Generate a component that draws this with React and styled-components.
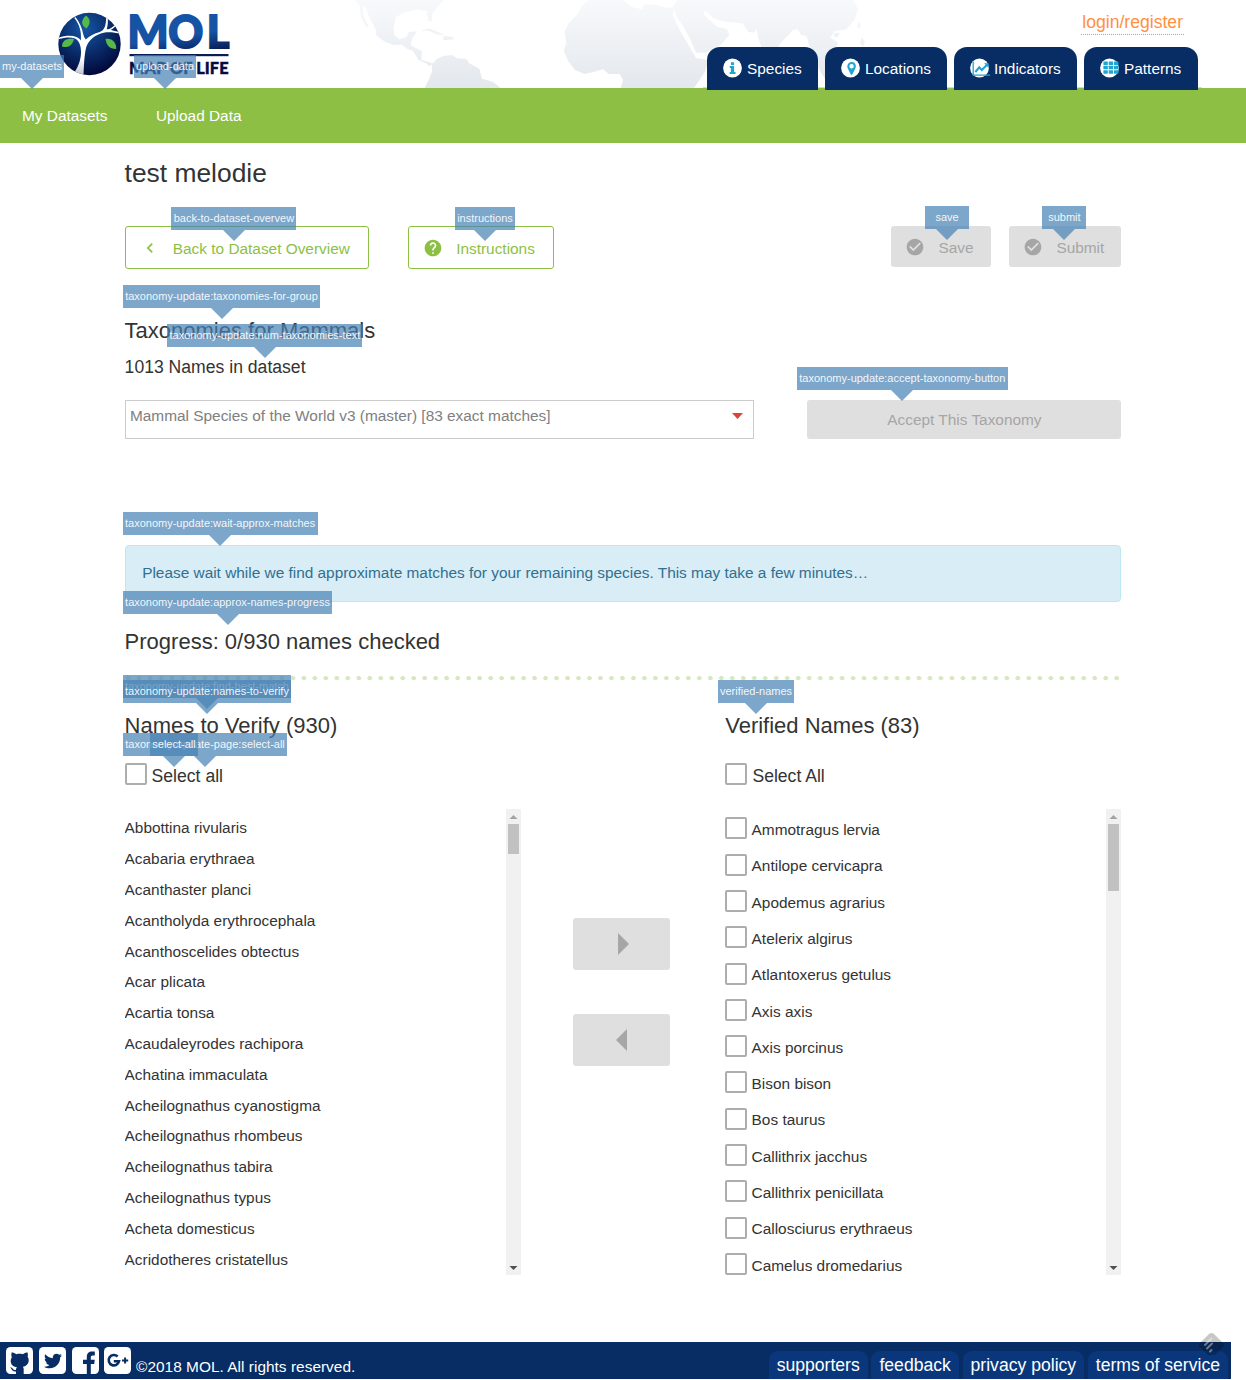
import React from 'react';
import styled, { createGlobalStyle, css } from 'styled-components';
import { MdCheckCircle, MdHelp, MdChevronLeft } from 'react-icons/md';
import { FaTwitter } from 'react-icons/fa';

const GlobalStyle = createGlobalStyle`
  * { box-sizing: border-box; }
  body {
    margin: 0;
    background: #fff;
    color: #333;
    font-family: "Liberation Sans", Arial, sans-serif;
    font-size: 15.4px;
    line-height: 22px;
  }
  h1, h2, h3, p, ul { margin: 0; padding: 0; font-weight: 400; }
  ul { list-style: none; }
`;

const Page = styled.div`
  display: flex;
  flex-direction: column;
  height: 1380px;
  overflow: hidden;
`;

/* ---------- translation key tags ---------- */

const TagBox = styled.span`
  position: absolute;
  left: ${(p) => p.$x}px;
  top: ${(p) => p.$y}px;
  z-index: 5;
  min-width: 44px;
  width: ${(p) => (p.$w ? p.$w + 'px' : 'auto')};
  height: 23px;
  background: rgba(70, 130, 180, 0.7);
  color: rgba(255, 255, 255, 0.92);
  font-size: 11px;
  line-height: 23px;
  text-align: center;
  white-space: nowrap;
  &::after {
    content: '';
    position: absolute;
    left: 50%;
    top: 23px;
    margin-left: -11px;
    border: 11px solid transparent;
    border-top-color: rgba(70, 130, 180, 0.7);
    border-bottom: 0;
  }
`;

const Tag = ({ x, y, w, children }) => (
  <TagBox $x={x} $y={y} $w={w}>{children}</TagBox>
);

/* ---------- header ---------- */

const Header = styled.header`
  position: relative;
  z-index: 2;
  height: 88px;
  flex: none;
  display: flex;
  justify-content: space-between;
  padding: 0 48px 0 56px;
`;

const WorldMap = styled.svg`
  position: absolute;
  left: 340px;
  top: 0;
`;

const LogoArt = styled.svg`
  position: relative;
  margin-top: 10px;
  flex: none;
`;

const HeaderRight = styled.div`
  position: relative;
  display: flex;
  flex-direction: column;
  align-items: flex-end;
`;

const Login = styled.a`
  flex: none;
  margin: 11px 14px 12px 0;
  height: 24px;
  padding: 0 1px;
  line-height: 22px;
  font-size: 17.6px;
  color: #ff9040;
  border-bottom: 1px dotted #ff9040;
`;

const Tabs = styled.nav`
  position: relative;
  flex: none;
  display: flex;
  gap: 7px;
  height: 43px;
  &::before {
    content: '';
    position: absolute;
    left: -4px;
    right: -4px;
    top: 40px;
    height: 1px;
    background: #d4d7dc;
  }
`;

const Tab = styled.a`
  position: relative;
  display: flex;
  align-items: center;
  gap: 5px;
  width: ${(p) => p.$w}px;
  padding: 1px 0 0 16px;
  color: #fff;
  background: #072d64;
  border-radius: 13px 13px 0 0;
  svg { flex: none; margin-top: -3px; }
`;

const GreenBar = styled.nav`
  position: relative;
  z-index: 3;
  flex: none;
  height: 55px;
  display: flex;
  align-items: center;
  gap: 48.4px;
  padding: 1px 0 0 22px;
  color: #fff;
`;

const GreenWrap = styled.div`
  flex: none;
  background: #8dbf45;
`;

const C = '#1fa5d2';
const glyphs = {
  info: <path fill={C} d="M7.9 4.2h3.2v2.7H7.9zM6.7 8h4.4v5.9h1.4V16H6.7v-2.1h1.2V10H6.7z" />,
  pin: <path fill={C} fillRule="evenodd" d="M10.6 4a4.3 4.3 0 0 0-4.3 4.3c0 1.2.4 1.9.9 2.9l2.6 5.2c.3.6 1.2.6 1.5 0l2.7-5.2c.5-1 .8-1.7.8-2.9A4.3 4.3 0 0 0 10.6 4zm0 2.1a2.2 2.2 0 1 1 0 4.4 2.2 2.2 0 0 1 0-4.4z" />,
  chart: (
    <g fill="none" stroke={C}>
      <path strokeWidth="1.3" d="M3.2 3.6v13.5h17" />
      <path strokeWidth="2.1" d="M5.3 14l4-4.6 2.5 2.5 5.5-5.4" />
      <path fill={C} stroke="none" d="M14 5.2h4.6v4.6z" />
    </g>
  ),
  grid: (
    <g fill={C}>
      {[3.4, 7.8, 12.2].map((y) => [3.4, 8.7, 14].map((x) => (
        <rect key={x + '-' + y} x={x} y={y} width="4.4" height="3.5" rx=".4" />
      )))}
    </g>
  ),
};

const TabIcon = ({ kind }) => (
  <svg width="19" height="20" viewBox="0 0 19 20" overflow="visible">
    <ellipse cx="9.5" cy="10" rx="9.4" ry="9.6" fill="#fff" />
    {glyphs[kind]}
  </svg>
);

const Logo = () => (
  <LogoArt width="180" height="70" viewBox="56 10 180 70">
    <defs>
      <radialGradient id="globe" cx=".42" cy=".25" r=".75">
        <stop offset="0" stopColor="#1656a8" />
        <stop offset=".5" stopColor="#0a2f6e" />
        <stop offset="1" stopColor="#02083a" />
      </radialGradient>
      <linearGradient id="word" gradientUnits="userSpaceOnUse" x1="129" y1="15" x2="134" y2="50">
        <stop offset=".3" stopColor="#1553a4" />
        <stop offset="1" stopColor="#030b40" />
      </linearGradient>
      <linearGradient id="trunk" x1="0" y1="0" x2="0" y2="1">
        <stop offset="0" stopColor="#fff" />
        <stop offset=".7" stopColor="#fff" />
        <stop offset="1" stopColor="#b9bec9" />
      </linearGradient>
      <clipPath id="disc"><circle cx="89.5" cy="44" r="31.2" /></clipPath>
    </defs>
    <circle cx="89.5" cy="44" r="31.2" fill="url(#globe)" />
    <g clipPath="url(#disc)">
      <path fill="url(#trunk)" d="M73 74c5-6 8-14 8-22 0-6-1.500-11-6-13.500-5-1.500-10-1-16.500.7v-1.400c7-2.300 13-2.600 18-.8 2 .8 3.500 2 4.300 3.500.8-8-1-16-6.500-22.500l1.200-1c4 5 6.500 11 7.700 17 .6 2.500 1.500 4 2.500 5.500 4-3.600 8.500-6 14-7.500 4-1.500 6.500-5 6.400-15h1.600c.5 6-.1 9.500-1 12.300 5 .6 9 2 14 3.200v1.400c-6-1.300-11-2-17-1.200-8 1.600-15 7-17.500 14.600C84.300 55 84 65 83.500 76z" />
      <path fill="#fff" d="M106.500 30c4-1.200 7-3.500 10-6.500l.8 1c-3 3.500-6 5.500-10 7z" />
    </g>
    <g fill="#57b947">
      <path d="M86 15.500c5 3.500 4.500 9 .3 13-6-3.500-5-9-.3-13z" />
      <path d="M62 46.500c0-6.500 5.500-8.500 12-7.500-1.500 6.500-6.500 9.500-12 7.500z" />
      <path d="M105.500 39c7-1 11 4 10.700 10-6.500.2-10-4-10.700-10z" />
    </g>
    <text
      transform="translate(129 0) scale(.95 1)"
      x="-1.600 41.200 81.800"
      y="48.300"
      fontFamily="Lato, sans-serif"
      fontWeight="900"
      fontSize="45.500"
      fill="url(#word)"
      stroke="url(#word)"
      strokeWidth="1.900"
    >
      MOL
    </text>
    <rect x="129.500" y="54" width="99" height="2.200" fill="#0a1c55" />
    <text x="129" y="74" fontFamily="Lato, sans-serif" fontWeight="900" fontSize="16.300" textLength="99.500" lengthAdjust="spacing" fill="#060c40" stroke="#060c40" strokeWidth=".4">MAP OF LIFE</text>
  </LogoArt>
);

const MapArt = () => (
  <WorldMap width="540" height="88" viewBox="0 0 540 88">
    <defs>
      <linearGradient id="land" gradientUnits="userSpaceOnUse" x1="0" y1="0" x2="0" y2="264">
        <stop offset="0" stopColor="#f8f9fb" />
        <stop offset="1" stopColor="#e3e8ed" />
      </linearGradient>
    </defs>
    <g transform="scale(.3444 .3333)" fill="url(#land)">
      <path d="M45 0L57 18 60 48 76 80 83 82 67 42 66 22 75 22 84 50 104 88 105 106 130 125 155 135 180 134 196 148 212 152 228 180 250 190 258 198 266 194 268 212 258 238 246 264H466L445 246 412 236 405 206 375 190 366 176 340 175 325 165 300 168 282 176 270 190 250 184 236 180 238 154 205 136 210 115 224 94 200 96 192 112 172 118 158 106 155 85 162 52 190 36 225 29 252 34 256 62 266 64 268 42 290 12 302 0Z" />
      <path d="M233 92L258 85 284 95 304 106 280 103 256 92ZM300 108L326 110 332 118 300 121Z" />
      <path d="M722 0L700 22 690 42 664 70 652 95 657 128 650 152 662 182 682 210 710 222 738 215 764 208 780 222 812 222 822 240 815 264H1028L1060 215 1070 180 1034 174 1008 128 988 92 965 44 974 20 950 24 918 14 885 12 876 28 850 22 822 0Z" />
      <path d="M980 0L968 18 978 52 996 78 1018 120 1034 158 1062 158 1104 136 1130 106 1124 86 1095 80 1080 66 1056 44 1060 30 1084 54 1110 64 1168 70 1186 96 1202 98 1210 88 1214 112 1226 150 1244 204 1262 160 1280 128 1316 90 1330 88 1338 104 1355 108 1364 140 1380 190 1410 240 1420 220 1410 180 1436 160 1446 128 1424 112 1436 94 1470 88 1494 60 1504 26 1490 0Z" />
      <path d="M1505 66L1512 72 1508 88 1502 80ZM1516 112L1524 126 1518 142 1510 128ZM1434 100L1450 98 1446 110 1436 112Z" />
    </g>
  </WorldMap>
);

/* ---------- content ---------- */

const Main = styled.main`
  flex: none;
  height: 1199px;
  padding: 0 124.6px;
`;

const Title = styled.h1`
  font-size: 26.4px;
  line-height: 30px;
  padding-top: 15px;
`;

const Heading = styled.h2`
  position: relative;
  padding-left: ${(p) => p.$indent || 0}px;
  font-size: 22px;
  line-height: 26px;
`;

const Progress = styled(Heading)`
  margin-top: 27px;
`;

const Sub = styled.h3`
  position: relative;
  padding-top: 12px;
  font-size: 17.6px;
  line-height: 22px;
`;

const ActionRow = styled.div`
  display: flex;
  align-items: flex-start;
  margin: 38px 0 49px;
  height: 43px;
`;

const buttonBase = css`
  position: relative;
  display: flex;
  align-items: center;
  border-radius: 3px;
  svg { flex: none; }
`;

const OutlineButton = styled.a`
  ${buttonBase}
  width: ${(p) => p.$w}px;
  height: 43px;
  margin-right: 39px;
  padding: 2px 0 0 14.2px;
  border: 1px solid #8dbf45;
  color: #8dbf45;
  svg { width: 20px; height: 20px; margin: -2px 13px 0 0; }
`;

const GrayButton = styled.div`
  ${buttonBase}
  width: ${(p) => p.$w}px;
  height: ${(p) => p.$h}px;
  padding-left: ${(p) => (p.$icon ? '14px' : 0)};
  padding-top: ${(p) => (p.$icon ? '2px' : 0)};
  justify-content: ${(p) => (p.$icon ? 'flex-start' : 'center')};
  background: #dfdfdf;
  color: #a6a6a6;
`;

const Right = styled.div`
  display: flex;
  gap: 18px;
  margin-left: auto;
  ${GrayButton} svg { width: 20px; height: 20px; margin: -2px 13px 0 0; }
`;

const PickRow = styled.div`
  display: flex;
  justify-content: space-between;
  margin: 22px 0 106px;
  height: 39px;
`;

const Select = styled.div`
  display: flex;
  justify-content: space-between;
  width: 629.4px;
  padding: 4px 10px 0 4.4px;
  border: 1px solid #ccc;
  color: #808080;
  svg { margin-top: 8px; }
`;

const Notice = styled.div`
  position: relative;
  height: 57px;
  padding: 16px 16.6px;
  background: #d9edf7;
  border: 1px solid #bce8f1;
  border-radius: 4px;
  color: #31708f;
`;

const Divider = styled.div`
  position: relative;
  height: 4px;
  margin: 21px 0 33px;
  background: radial-gradient(circle at 2.6px 2.2px, #d6e8c0 2px, transparent 2.5px) .5px 0 / 10.99px 4px repeat-x;
`;

const Columns = styled.div`
  display: flex;
  justify-content: space-between;
`;

const Column = styled.section`
  width: 396.6px;
`;

const SelectAll = styled.label`
  position: relative;
  display: flex;
  gap: ${(p) => p.$gap}px;
  height: 22px;
  margin: 24px 0;
  font-size: 17.6px;
  line-height: 27px;
`;

const Box = styled.span`
  flex: none;
  width: 22px;
  height: 22px;
  border: 2px solid #adadad;
  border-radius: 2px;
`;

const ListFrame = styled.div`
  display: flex;
  justify-content: space-between;
  height: 466px;
  overflow: hidden;
`;

const NameList = styled.ul`
  padding-top: ${(p) => p.$top}px;
`;

const Name = styled.li`
  height: 30.8px;
  line-height: 30.8px;
`;

const CheckName = styled.li`
  display: flex;
  gap: 4.8px;
  height: 36.3px;
  padding-top: 4px;
  line-height: 26px;
`;

const CheckText = styled.span`
  margin-top: -0.35px;
`;

const Track = styled.div`
  display: flex;
  flex-direction: column;
  align-items: center;
  width: 15px;
  background: #f1f1f1;
  svg { flex: none; }
`;

const Thumb = styled.div`
  width: 11px;
  height: ${(p) => p.$h}px;
  margin-bottom: auto;
  background: #c1c1c1;
`;

const Scrollbar = ({ thumb }) => (
  <Track>
    <svg width="15" height="15"><path d="M3.500 10L7.500 6 11.500 10Z" fill="#a3a3a3" /></svg>
    <Thumb $h={thumb} />
    <svg width="15" height="15"><path d="M3.500 6L7.500 10 11.500 6Z" fill="#505050" /></svg>
  </Track>
);

const Movers = styled.div`
  display: flex;
  flex-direction: column;
  gap: 44px;
  width: 97px;
  margin-right: 4px;
  padding-top: 205px;
`;

/* ---------- footer ---------- */

const Footer = styled.footer`
  position: relative;
  flex: none;
  width: 1231px;
  height: 37px;
  display: flex;
  align-items: flex-start;
  padding: 0 3px 0 6.4px;
  background: #072d64;
  color: #fff;
`;

const Social = styled.div`
  display: flex;
  gap: 5.7px;
  margin-top: 5.4px;
`;

const Tile = styled.span`
  display: flex;
  align-items: center;
  justify-content: center;
  width: 27px;
  height: 27px;
  border-radius: 4.5px;
  background: #fff;
  color: #072d64;
  overflow: hidden;
`;

const Copyright = styled.span`
  margin: 14px 0 0 4.6px;
  letter-spacing: 0.03px;
`;

const FooterLinks = styled.div`
  display: flex;
  gap: 3.7px;
  margin: 9px 0 0 auto;
  font-size: 17.6px;
`;

const FooterLink = styled.a`
  height: 28px;
  padding: 0 8px;
  line-height: 28px;
  background: #0a377b;
  border-radius: 9px 9px 0 0;
`;

const Badge = styled.svg`
  position: absolute;
  left: 1198px;
  top: -10px;
`;

const Octocat = () => (
  <svg width="27" height="27" viewBox="0 0 27 27">
    <path fill="currentColor" d="M5.600 5.600c1.800 0 3.300.7 4.600 1.700 2.200-.6 4.500-.6 6.700 0 1.300-1 2.800-1.700 4.600-1.700.6 1.600.5 3 .1 4.200 1 1.300 1.300 2.900 1 4.700-.5 3.200-2.700 4.700-5.700 5.200.6.700.8 1.500.8 2.500V27H10v-2.600c-2.400.3-3.600-.5-4.400-2.100-.4-.8-.9-1.300-1.600-1.700 1.400-.4 2.300.3 3 1.300.8 1 1.600 1.300 3 .9.100-1.200.4-1.900 1-2.500-3.200-.5-5.700-1.900-6.200-5.300-.3-1.800.1-3.300 1-4.600-.5-1.200-.6-2.900-.2-4.800z" />
  </svg>
);

const FacebookF = () => (
  <svg width="27" height="27" viewBox="0 0 27 27">
    <path fill="currentColor" d="M14.800 27V17H11v-4.200h3.800V9.800c0-3.500 2.200-5.300 5.200-5.300h2.800v3.900h-2c-1.500 0-2 .8-2 2v2.400h4l-.6 4.200h-3.400v10z" />
  </svg>
);

const GooglePlus = () => (
  <svg width="27" height="27" viewBox="0 0 27 27" fill="none" stroke="currentColor">
    <path strokeWidth="2.600" d="M13.600 9.500A5.200 5.200 0 1 0 15 14.300H9.800" />
    <path strokeWidth="2" d="M18 13.500h6.200M21.100 10.400v6.200" />
  </svg>
);

const toVerify = [
  'Abbottina rivularis', 'Acabaria erythraea', 'Acanthaster planci', 'Acantholyda erythrocephala',
  'Acanthoscelides obtectus', 'Acar plicata', 'Acartia tonsa', 'Acaudaleyrodes rachipora',
  'Achatina immaculata', 'Acheilognathus cyanostigma', 'Acheilognathus rhombeus',
  'Acheilognathus tabira', 'Acheilognathus typus', 'Acheta domesticus', 'Acridotheres cristatellus',
];

const verified = [
  'Ammotragus lervia', 'Antilope cervicapra', 'Apodemus agrarius', 'Atelerix algirus',
  'Atlantoxerus getulus', 'Axis axis', 'Axis porcinus', 'Bison bison', 'Bos taurus',
  'Callithrix jacchus', 'Callithrix penicillata', 'Callosciurus erythraeus', 'Camelus dromedarius',
];

const tabs = [
  ['info', 'Species', 111], ['pin', 'Locations', 122], ['chart', 'Indicators', 123], ['grid', 'Patterns', 114],
];

export default function App() {
  return (
    <Page>
      <GlobalStyle />
      <Header>
        <MapArt />
        <Logo />
        <HeaderRight>
          <Login>login/register</Login>
          <Tabs>
            {tabs.map(([kind, label, w]) => (
              <Tab key={kind} $w={w}><TabIcon kind={kind} />{label}</Tab>
            ))}
          </Tabs>
        </HeaderRight>
      </Header>
      <GreenWrap>
        <GreenBar>
          <span>My Datasets</span>
          <span>Upload Data</span>
          <Tag x={0} y={-33} w={64}>my-datasets</Tag>
          <Tag x={134} y={-33} w={62}>upload-data</Tag>
        </GreenBar>
      </GreenWrap>

      <Main>
        <Title>test melodie</Title>
        <ActionRow>
          <OutlineButton $w={244.4}>
            <MdChevronLeft />Back to Dataset Overview
            <Tag x={45.8} y={-20} w={125}>back-to-dataset-overvew</Tag>
          </OutlineButton>
          <OutlineButton $w={146}>
            <MdHelp />Instructions
            <Tag x={46} y={-20} w={60}>instructions</Tag>
          </OutlineButton>
          <Right>
            <GrayButton $icon $w={100} $h={41}>
              <MdCheckCircle />Save
              <Tag x={33.6} y={-20} w={44}>save</Tag>
            </GrayButton>
            <GrayButton $icon $w={112} $h={41}>
              <MdCheckCircle />Submit
              <Tag x={33} y={-20} w={44}>submit</Tag>
            </GrayButton>
          </Right>
        </ActionRow>

        <Heading>
          Taxonomies for Mammals
          <Tag x={-1.6} y={-33} w={197}>taxonomy-update:taxonomies-for-group</Tag>
        </Heading>
        <Sub>
          1013 Names in dataset
          <Tag x={42.8} y={-20} w={195}>taxonomy-update:num-taxonomies-text</Tag>
        </Sub>
        <PickRow>
          <Select>
            Mammal Species of the World v3 (master) [83 exact matches]
            <svg width="11" height="6"><path d="M0 0H11L5.500 6Z" fill="#db4437" /></svg>
          </Select>
          <GrayButton $w={314} $h={39}>
            Accept This Taxonomy
            <Tag x={-10.6} y={-33} w={211}>taxonomy-update:accept-taxonomy-button</Tag>
          </GrayButton>
        </PickRow>

        <Notice>
          Please wait while we find approximate matches for your remaining species. This may take a few minutes…
          <Tag x={-3} y={-34} w={195}>taxonomy-update:wait-approx-matches</Tag>
          <Tag x={-2.6} y={45} w={209}>taxonomy-update:approx-names-progress</Tag>
        </Notice>
        <Progress>Progress: 0/930 names checked</Progress>
        <Divider>
          <Tag x={-1.6} y={-1} w={168}>taxonomy-update:find-best-match</Tag>
        </Divider>

        <Columns>
          <Column>
            <Heading>
              Names to Verify (930)
              <Tag x={-1.6} y={-33} w={168}>taxonomy-update:names-to-verify</Tag>
            </Heading>
            <SelectAll $gap={5}>
              <Box />Select all
              <Tag x={-1.6} y={-30} w={164}>taxonomy-update-page:select-all</Tag>
              <Tag x={25.4} y={-30} w={48}>select-all</Tag>
            </SelectAll>
            <ListFrame>
              <NameList $top={4.35}>{toVerify.map((n) => <Name key={n}>{n}</Name>)}</NameList>
              <Scrollbar thumb={30} />
            </ListFrame>
          </Column>
          <Movers>
            <GrayButton $w={97} $h={52}>
              <svg width="15" height="22"><path d="M4 0L15 11 4 22Z" fill="#a6a6a6" /></svg>
            </GrayButton>
            <GrayButton $w={97} $h={52}>
              <svg width="11" height="22"><path d="M11 0L0 11 11 22Z" fill="#a6a6a6" /></svg>
            </GrayButton>
          </Movers>
          <Column>
            <Heading $indent={0.4}>
              Verified Names (83)
              <Tag x={-6.8} y={-33} w={76}>verified-names</Tag>
            </Heading>
            <SelectAll $gap={5.6}><Box />Select All</SelectAll>
            <ListFrame>
              <NameList $top={4.4}>
                {verified.map((n) => <CheckName key={n}><Box /><CheckText>{n}</CheckText></CheckName>)}
              </NameList>
              <Scrollbar thumb={67} />
            </ListFrame>
          </Column>
        </Columns>
      </Main>

      <Footer>
        <Social>
          <Tile><Octocat /></Tile>
          <Tile><FaTwitter size={18} /></Tile>
          <Tile><FacebookF /></Tile>
          <Tile><GooglePlus /></Tile>
        </Social>
        <Copyright>©2018 MOL. All rights reserved.</Copyright>
        <FooterLinks>
          <FooterLink>supporters</FooterLink>
          <FooterLink>feedback</FooterLink>
          <FooterLink>privacy policy</FooterLink>
          <FooterLink>terms of service</FooterLink>
        </FooterLinks>
        <Badge width="27" height="24" viewBox="0 0 27 24">
          <path d="M11 2Q13.500 0 16 2L25 11Q27 13 25 15L17 23H10L2 15Q0 13 2 11Z" fill="#000" opacity=".22" />
          <g stroke="#fff" strokeWidth="2" strokeLinecap="round" opacity=".4">
            <path d="M7 13L13.500 6.500M9 16.500L14 11.500M12 19.500L13.500 18" />
          </g>
        </Badge>
      </Footer>
    </Page>
  );
}
